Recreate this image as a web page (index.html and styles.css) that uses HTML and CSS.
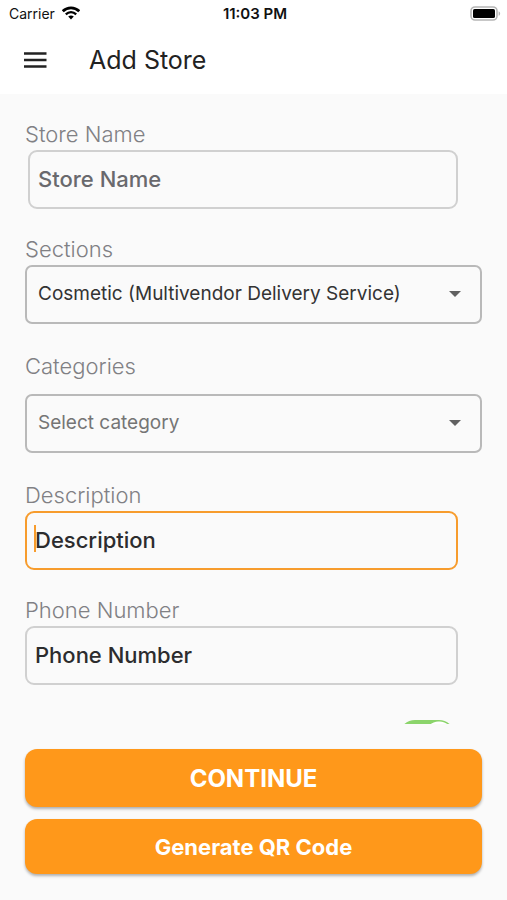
FILE: index.html
```html
<!DOCTYPE html>
<html lang="en">
<head>
  <meta charset="utf-8">
  <meta name="viewport" content="width=device-width, initial-scale=1">
  <title>Add Store</title>
  <link rel="stylesheet" href="styles.css">
</head>
<body>
  <div class="status">
    <div class="status-carrier">
      <span>Carrier</span>
      <svg class="wifi" viewBox="0 0 18 14" width="18" height="14" aria-hidden="true">
        <path d="M.8 5.2C5.4 .7 12.6 .7 17.2 5.2" fill="none" stroke="#000" stroke-width="2.7"/>
        <path d="M3.8 8.3C6.8 5.4 11.2 5.4 14.2 8.3" fill="none" stroke="#000" stroke-width="2.3"/>
        <path d="M6.2 10.5C7.9 9 10.1 9 11.8 10.5L9 13.4Z" fill="#000"/>
      </svg>
    </div>
    <time class="status-time">11:03 PM</time>
    <svg class="battery" viewBox="0 0 31 15" width="31" height="15" aria-hidden="true">
      <rect x="1" y="1" width="26" height="13" rx="4" fill="#fff" stroke="#b5b5b5" stroke-width="1.6"/>
      <rect x="3" y="3" width="22" height="9" rx="1.6" fill="#000"/>
      <path d="M28.6 5.2C30.6 6 30.6 9 28.6 9.8Z" fill="#b5b5b5"/>
    </svg>
  </div>

  <header class="appbar">
    <button class="menu" type="button" aria-label="Menu">
      <svg viewBox="0 0 24 18" width="24" height="18" aria-hidden="true">
        <path d="M0 2.5H22.5M0 9H22.5M0 15.5H22.5" stroke="#222" stroke-width="2.4"/>
      </svg>
    </button>
    <h1 class="title">Add Store</h1>
  </header>

  <main class="form">
    <div class="field">
      <label class="label" for="name">Store Name</label>
      <div class="box box-inset"><input class="input input-muted" id="name" type="text" placeholder="Store Name"></div>
    </div>
    <div class="field">
      <label class="label" for="section">Sections</label>
      <div class="picker">
        <select class="select" id="section"><option>Cosmetic (Multivendor Delivery Service)</option></select>
        <svg class="arrow" viewBox="0 0 12 6" width="12" height="6" aria-hidden="true"><path d="M0 0H12L6 6Z" fill="#616161"/></svg>
      </div>
    </div>
    <div class="field field-spaced">
      <label class="label" for="category">Categories</label>
      <div class="picker">
        <select class="select select-empty" id="category"><option>Select category</option></select>
        <svg class="arrow" viewBox="0 0 12 6" width="12" height="6" aria-hidden="true"><path d="M0 0H12L6 6Z" fill="#616161"/></svg>
      </div>
    </div>
    <div class="field">
      <label class="label" for="description">Description</label>
      <div class="box box-active"><input class="input" id="description" type="text" placeholder="Description"></div>
    </div>
    <div class="field">
      <label class="label" for="phone">Phone Number</label>
      <div class="box"><input class="input" id="phone" type="tel" placeholder="Phone Number"></div>
    </div>
    <div class="toggle-row"><input class="toggle" type="checkbox" role="switch" aria-label="Store status" checked></div>
  </main>

  <footer class="actions">
    <button class="button button-main" type="button">CONTINUE</button>
    <button class="button" type="button">Generate QR Code</button>
  </footer>
</body>
</html>
```
FILE: styles.css
```css
* {
  box-sizing: border-box;
}

body {
  margin: 0;
  height: 100vh;
  display: flex;
  flex-direction: column;
  background: #fafafa;
  color: #222;
  font-family: Inter, "Liberation Sans", sans-serif;
}

input,
select,
button {
  font-family: inherit;
}

/* Status bar */
.status {
  display: grid;
  grid-template-columns: 1fr auto 1fr;
  align-items: center;
  height: 28px;
  padding: 0 6px 2px 9px;
  background: #fff;
  color: #111;
  font-size: 14px;
}

.status-carrier {
  display: flex;
  align-items: center;
  gap: 7px;
}

.status-time {
  font-size: 15px;
  font-weight: 600;
}

.battery {
  justify-self: end;
}

/* App bar */
.appbar {
  display: flex;
  align-items: center;
  gap: 41px;
  height: 66px;
  padding: 0 24px 2px;
  background: #fff;
}

.menu {
  display: flex;
  padding: 0;
  border: 0;
  background: none;
}

.title {
  margin: 0;
  font-size: 25px;
  font-weight: 400;
}

/* Form */
.form {
  flex: 1;
  min-height: 0;
  display: flex;
  flex-direction: column;
  gap: 28px;
  padding: 28px 25px 0;
  overflow: hidden auto;
  scrollbar-width: none;
}

.field {
  flex: none;
  display: flex;
  flex-direction: column;
}

.field-spaced {
  gap: 12px;
  margin: 2px 0;
}

.label {
  height: 28px;
  color: #808084;
  font-size: 22px;
  font-weight: 300;
  line-height: 25px;
}

.box {
  position: relative;
  height: 59px;
  margin-right: 24px;
  border: 2px solid #d0d0d0;
  border-radius: 9px;
}

.box-inset {
  margin-left: 3px;
}

.box-active {
  border-color: #f79c2d;
}

/* Text cursor of the active field */
.box-active::before {
  content: "";
  position: absolute;
  left: 7px;
  top: 12px;
  width: 2px;
  height: 27px;
  background: #f79c2d;
}

.input {
  width: 100%;
  height: 100%;
  padding: 0 8px 2px;
  border: 0;
  outline: 0;
  background: none;
  color: #2c2c2e;
  font-size: 22px;
  font-weight: 500;
}

.input::placeholder {
  color: #2c2c2e;
  opacity: 1;
}

.input-muted::placeholder {
  color: #69696d;
}

.picker {
  position: relative;
  display: flex;
}

.select {
  appearance: none;
  width: 100%;
  height: 59px;
  padding: 0 40px 2px 11px;
  border: 2px solid #b9b9b9;
  border-radius: 7px;
  background: none;
  color: #333;
  font-size: 19px;
}

.select-empty {
  color: #757575;
}

.arrow {
  position: absolute;
  right: 21px;
  top: 26px;
  pointer-events: none;
}

.toggle-row {
  flex: none;
  display: flex;
  justify-content: flex-end;
  padding: 7px 27px 0 0;
}

.toggle {
  appearance: none;
  width: 56px;
  height: 32px;
  margin: 0;
  border-radius: 16px;
  background: radial-gradient(circle at 40px 16px, #fff 14px, #8bd46b 15px);
}

/* Bottom actions */
.actions {
  flex: none;
  display: flex;
  flex-direction: column;
  gap: 12px;
  padding: 25px 25px 26px;
}

.button {
  height: 55px;
  padding: 0;
  border: 0;
  border-radius: 12px;
  background: #ff981a;
  box-shadow: 0 2px 3px rgba(0, 0, 0, 0.3);
  color: #fff;
  font-size: 22px;
  font-weight: 700;
}

.button-main {
  height: 58px;
  font-size: 24px;
}
```
